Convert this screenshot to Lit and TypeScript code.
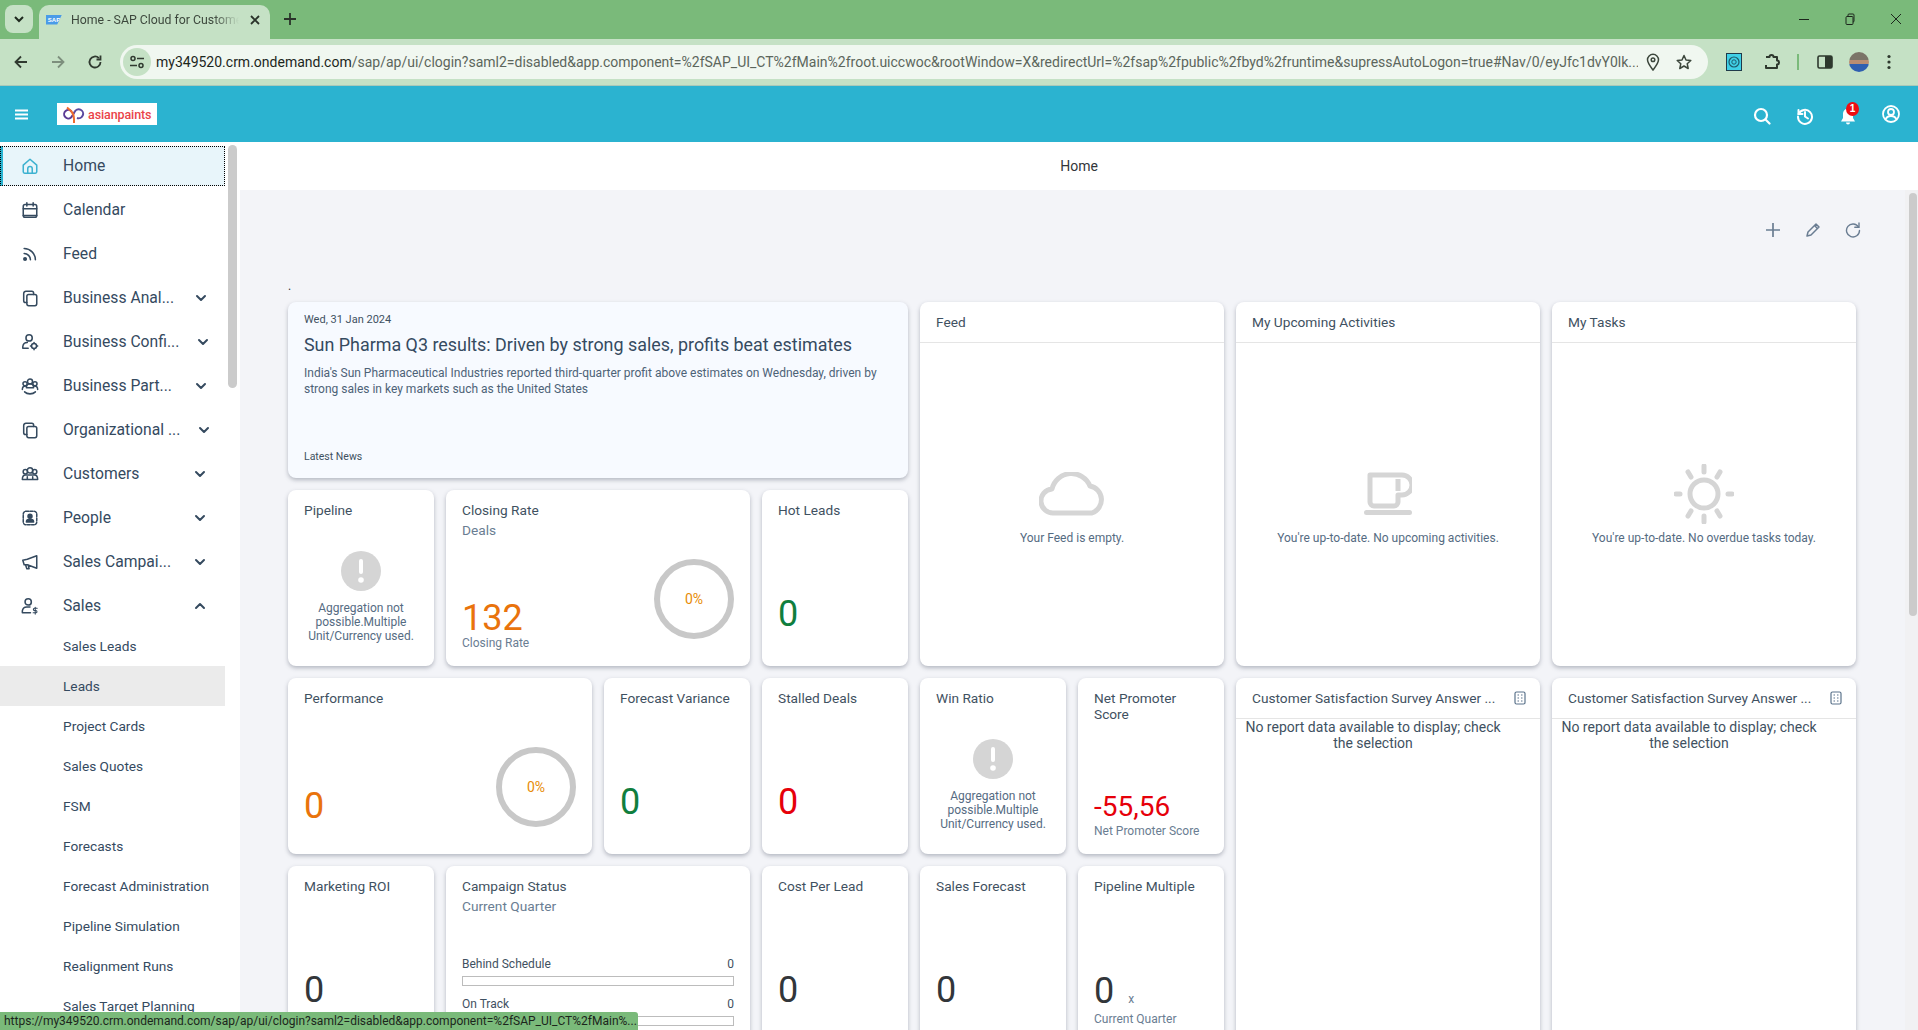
import { LitElement, html, css, svg } from "lit";
import { customElement } from "lit/decorators.js";

const line = (body: any, size = 18, box = 20) => html`<svg class="ico" width=${size} height=${size} viewBox="0 0 ${box} ${box}" fill="none" stroke="currentColor" stroke-width="1.700" stroke-linecap="round" stroke-linejoin="round">${body}</svg>`;

const navIcons: Record<string, any> = {
  home: svg`<path d="M2.500 9 10 2.500 17.500 9v7.500a1.500 1.500 0 0 1-1.500 1.500H4a1.500 1.500 0 0 1-1.500-1.500Z"/><path d="M7.500 18v-5a2.500 2.500 0 0 1 5 0v5"/>`,
  calendar: svg`<rect x="2.500" y="4" width="15" height="14" rx="2"/><path d="M2.500 8.500h15M6.500 2v3.500M13.500 2v3.500M2.500 16h15"/>`,
  feed: svg`<circle cx="4.500" cy="15.500" r="1.400" fill="currentColor"/><path d="M3.500 9.500a7 7 0 0 1 7 7M3.500 4a12.500 12.500 0 0 1 12.500 12.500"/>`,
  stack: svg`<rect x="6.500" y="6" width="11" height="12.500" rx="2"/><path d="M6.500 15H5a2 2 0 0 1-2-2V5a2.500 2.500 0 0 1 2.500-2.500H12a2 2 0 0 1 2 2V6"/>`,
  config: svg`<circle cx="9" cy="5.500" r="3.500"/><path d="M2 17v-2a5 5 0 0 1 5-4.500M2 17h6"/><circle cx="14.500" cy="14.500" r="2.800"/><path d="M14.500 10.500v1M14.500 17.500v1M10.500 14.500h1M17.500 14.500h1"/>`,
  partner: svg`<circle cx="10" cy="5" r="2.800"/><circle cx="4.500" cy="7.500" r="2.300"/><circle cx="15.500" cy="7.500" r="2.300"/><path d="M1.500 14c0-3 1.500-4 3.500-4M18.500 14c0-3-1.500-4-3.500-4M6 12c0-3 2-4.500 4-4.500s4 1.500 4 4.500Z"/><path d="M4 16.500c3 3 9 3 12 0"/>`,
  customers: svg`<circle cx="10" cy="6" r="3"/><circle cx="4.800" cy="7.500" r="2.400"/><circle cx="15.200" cy="7.500" r="2.400"/><path d="M1.500 16c0-3.500 1-5 3.500-5h10c2.500 0 3.500 1.500 3.500 5ZM7 16v-3M13 16v-3"/>`,
  people: svg`<rect x="2.500" y="2.500" width="15" height="15" rx="3" stroke-dasharray="3 1.500"/><circle cx="10" cy="8" r="2.200" fill="currentColor"/><path d="M6 14.500c0-2.500 2-3 4-3s4 .5 4 3Z" fill="currentColor"/>`,
  campaign: svg`<path d="M17.500 3v14L7 13H3.500L2 8l5-1ZM5 13l1.500 4.500H9L8 13.500"/>`,
  sales: svg`<circle cx="8" cy="5.500" r="3.500"/><path d="M1.500 17.500v-2A5 5 0 0 1 6.500 11H10M1.500 17.500h9"/><path d="M18 12.500h-3a1.200 1.200 0 0 0 0 2.500h1.500a1.200 1.200 0 0 1 0 2.500H13.500M15.800 11.500v7.500" stroke-width="1.200"/>`,
};

const down = (up = false) => html`<svg class="chev" width="12" height="12" viewBox="0 0 12 12" fill="none" stroke="currentColor" stroke-width="2" stroke-linecap="round" stroke-linejoin="round"><path d=${up ? "M2 8l4-4 4 4" : "M2 4l4 4 4-4"} /></svg>`;

type NavItem = { label: string; icon: string; chev?: "down" | "up"; nudge?: number; active?: boolean };

const NAV: NavItem[] = [
  { label: "Home", icon: "home", active: true },
  { label: "Calendar", icon: "calendar" },
  { label: "Feed", icon: "feed" },
  { label: "Business Anal...", icon: "stack", chev: "down", nudge: 18 },
  { label: "Business Confi...", icon: "config", chev: "down", nudge: 16 },
  { label: "Business Part...", icon: "partner", chev: "down", nudge: 18 },
  { label: "Organizational ...", icon: "stack", chev: "down", nudge: 15 },
  { label: "Customers", icon: "customers", chev: "down", nudge: 19 },
  { label: "People", icon: "people", chev: "down", nudge: 19 },
  { label: "Sales Campai...", icon: "campaign", chev: "down", nudge: 19 },
  { label: "Sales", icon: "sales", chev: "up", nudge: 19 },
];

const SUB = ["Sales Leads", "Leads", "Project Cards", "Sales Quotes", "FSM", "Forecasts", "Forecast Administration", "Pipeline Simulation", "Realignment Runs", "Sales Target Planning"];

const ring = html`<div class="ring"><span>0%</span></div>`;

const aggError = html`<div class="agg">
  <svg width="40" height="40" viewBox="0 0 40 40"><circle cx="20" cy="20" r="20" fill="#d5d5d5"/><rect x="18" y="8" width="4" height="15" rx="2" fill="#fff"/><circle cx="20" cy="29" r="2.800" fill="#fff"/></svg>
  <p>Aggregation not possible.Multiple Unit/Currency used.</p>
</div>`;

const kpi = (title: string, value: string, color: string, extra: { sub?: string; foot?: string; wide?: boolean; ring?: boolean; unit?: string; small?: boolean } = {}) => html`
  <div class="tile ${extra.wide ? "w2" : ""}">
    <div class="title">${title}</div>
    ${extra.sub ? html`<div class="sub">${extra.sub}</div>` : ""}
    <div class="body">
      <div class="nums">
        <div class="value ${color} ${extra.small ? "small" : ""} ${extra.ring && !extra.foot ? "ringgap" : ""} ${extra.foot ? "footed" : ""} ${extra.unit ? "united" : ""}">${value}${extra.unit ? html`<span class="unit">${extra.unit}</span>` : ""}</div>
        ${extra.foot ? html`<div class="foot">${extra.foot}</div>` : ""}
      </div>
      ${extra.ring ? ring : ""}
    </div>
  </div>`;

const errTile = (title: string) => html`<div class="tile"><div class="title">${title}</div>${aggError}</div>`;

const headTile = (title: string, text: string, art: any) => html`
  <div class="tile w2 h2 flush">
    <div class="thead"><span>${title}</span></div>
    <div class="empty"><div class="art">${art}</div><div class="etext">${text}</div></div>
  </div>`;

const surveyTile = html`
  <div class="tile w2 h2 flush">
    <div class="thead">
      <span class="ell">Customer Satisfaction Survey Answer ...</span>
      <svg width="12" height="14" viewBox="0 0 12 14" fill="none" stroke="#5b738b" stroke-width="1.200"><rect x="1" y="1" width="10" height="12" rx="1.500"/><path d="M3.500 4h1.500M7 4h1.500M3.500 7h1.500M7 7h1.500M3.500 10h1.500M7 10h1.500"/></svg>
    </div>
    <div class="nodata">No report data available to display; check the selection</div>
  </div>`;

@customElement("app-root")
export class AppRoot extends LitElement {
  static styles = css`
    :host {
      display: flex;
      flex-direction: column;
      height: 1030px;
      overflow: hidden;
      font-family: Roboto, "Noto Sans", sans-serif;
      color: #354a5f;
      background: #fff;
    }
    p { margin: 0; }

    .tabs {
      height: 39px;
      flex: none;
      background: #7aba7a;
      display: flex;
      align-items: flex-end;
      padding-left: 5px;
      color: #1f2a1f;
    }
    .tabsearch {
      width: 28px;
      height: 28px;
      margin-bottom: 6px;
      border-radius: 8px;
      background: #c5e1c5;
      display: grid;
      place-items: center;
    }
    .tab {
      width: 231px;
      height: 34px;
      margin-left: 6px;
      background: #c5e1c5;
      border-radius: 10px 10px 0 0;
      display: flex;
      align-items: center;
      padding: 0 0 5px 7px;
      box-sizing: border-box;
      font-size: 12.300px;
      color: #3c473c;
    }
    .fav {
      width: 16px;
      height: 10px;
      background: #4a9be8;
      color: #fff;
      font: 700 6px "Liberation Sans", sans-serif;
      text-align: center;
      line-height: 10px;
      clip-path: polygon(0 0, 100% 0, 70% 100%, 0 100%);
      flex: none;
    }
    .tabtext {
      width: 168px;
      margin-left: 9px;
      white-space: nowrap;
      overflow: hidden;
      -webkit-mask-image: linear-gradient(90deg, #000 85%, transparent);
    }
    .tabx { margin-left: 10px; display: flex; color: #2a332a; }
    .newtab { margin: 0 0 13px 13px; display: flex; color: #2a332a; }
    .winbtns {
      margin: 0 0 14px auto;
      display: flex;
      gap: 34px;
      padding-right: 16px;
      color: #1c261c;
    }
    .winbtns svg { display: block; }

    .toolbar {
      height: 46px;
      flex: none;
      background: #c5e1c5;
      border-bottom: 1px solid #a9c9b9;
      display: flex;
      align-items: center;
      color: #303a30;
    }
    .navbtns { display: flex; width: 120px; padding-left: 13px; gap: 21px; box-sizing: border-box; }
    .navbtns svg { flex: none; }
    .dim { color: #7d8f7d; }
    .pill {
      width: 1588px;
      height: 34px;
      border-radius: 17px;
      background: #f0f7f0;
      display: flex;
      align-items: center;
      padding-left: 3px;
      box-sizing: border-box;
    }
    .tune {
      width: 28px;
      height: 28px;
      border-radius: 50%;
      background: #c5e1c5;
      display: grid;
      place-items: center;
      flex: none;
    }
    .url {
      margin-left: 5px;
      width: 1482px;
      flex: none;
      white-space: nowrap;
      overflow: hidden;
      font-size: 14px;
      color: #5c665c;
    }
    .url b { font-weight: 400; color: #1c261c; }
    .pillend { display: flex; gap: 16px; margin-left: 8px; color: #3c473c; align-items: center; }
    .ext { display: flex; align-items: center; margin-left: 18px; color: #2d382d; }
    .extlogo { display: block; }
    .sep { width: 2px; height: 16px; background: #7aba7a; margin: 0 18px 0 16px; }
    .avatar { width: 20px; height: 20px; border-radius: 50%; background: linear-gradient(#7b7468 0 40%, #b98d72 40% 58%, #2f5fb0 58%); margin: 0 18px 0 16px; }

    .shellbar {
      height: 56px;
      flex: none;
      background: #2bb3d0;
      display: flex;
      align-items: center;
      color: #fff;
    }
    .burger { margin-left: 15px; display: flex; }
    .logo {
      margin-left: 29px;
      width: 100px;
      height: 22px;
      background: #fff;
      display: flex;
      align-items: center;
      padding-left: 5px;
      box-sizing: border-box;
      gap: 2px;
    }
    .logo span {
      font-size: 12.500px;
      font-weight: 500;
      letter-spacing: -0.100px;
      color: #ea4348;
    }
    .shellicons { margin-left: auto; display: flex; gap: 25px; padding-right: 18px; align-items: center; }
    .drop { margin-top: 3px; display: block; }
    .bell { position: relative; display: flex; margin-top: 3px; }
    .badge {
      position: absolute;
      top: -5px;
      left: 7px;
      width: 13px;
      height: 14px;
      border-radius: 50%;
      background: #ee0d12;
      font: 700 10px "Liberation Sans", sans-serif;
      line-height: 14px;
      text-align: center;
    }

    .app { flex: 1; min-height: 0; display: flex; }
    .side { width: 225px; flex: none; padding-top: 4px; overflow: hidden; }
    .row {
      height: 40px;
      margin-bottom: 4px;
      display: flex;
      align-items: center;
      font-size: 15.700px;
      white-space: nowrap;
      color: #354a5f;
      box-sizing: border-box;
    }
    .row span { line-height: 18px; padding-bottom: 1px; }
    .row .ico { margin-left: 21px; margin-right: 24px; flex: none; }
    .row.active {
      background: #e8f5fa;
      box-shadow: inset 3px 0 0 #2bb3d0;
      outline: 1px dotted #000;
      outline-offset: -1px;
    }
    .row.active .ico { color: #3db2d0; }
    .chev { flex: none; }
    .subrow {
      height: 40px;
      padding-left: 63px;
      display: flex;
      align-items: center;
      font-size: 13.700px;
      white-space: nowrap;
    }
    .subrow.sel { background: #ebebeb; }
    .subs { margin-top: -4px; }
    .rail { width: 15px; flex: none; padding: 3px 3px 0; box-sizing: border-box; }
    .thumb { width: 9px; height: 243px; border-radius: 5px; background: #cbcbcb; }

    .main { flex: 1; min-width: 0; display: flex; flex-direction: column; }
    .pagehead {
      height: 48px;
      flex: none;
      display: flex;
      align-items: center;
      justify-content: center;
      font-size: 14px;
      color: #32363a;
    }
    .stage { flex: 1; min-height: 0; display: flex; background: #f3f4f8; }
    .canvas { flex: 1; min-width: 0; padding-left: 48px; overflow: hidden; }
    .actions {
      height: 80px;
      display: flex;
      justify-content: flex-end;
      align-items: center;
      gap: 24px;
      padding-right: 44px;
      color: #6a7d92;
      box-sizing: border-box;
    }
    .dot { height: 32px; font-size: 12px; line-height: 32px; color: #32363a; }
    .vrail { width: 13px; flex: none; background: #f1f1f3; padding: 3px 1px 0 4px; box-sizing: border-box; }
    .vthumb { width: 8px; height: 423px; border-radius: 4px; background: #cbcbcb; }

    .grid {
      display: grid;
      grid-template-columns: repeat(10, 146px);
      grid-auto-rows: 176px;
      gap: 12px;
    }
    .tile {
      background: #fff;
      border-radius: 8px;
      box-shadow: 0 2px 4px rgba(60, 70, 90, 0.35);
      padding: 12px 16px 15px;
      box-sizing: border-box;
      display: flex;
      flex-direction: column;
      min-width: 0;
    }
    .w2 { grid-column: span 2; }
    .w4 { grid-column: span 4; }
    .h2 { grid-row: span 2; }
    .flush { padding: 0; }
    .title { font-size: 13.700px; line-height: 16px; color: #3f5161; }
    .sub { font-size: 13.700px; line-height: 16px; margin-top: 4px; color: #6a7d92; }
    .body { flex: 1; display: flex; align-items: flex-end; justify-content: space-between; min-height: 0; }
    .value { font-size: 36px; line-height: 36px; margin-bottom: 19px; }
    .value.ringgap { margin-bottom: 15px; }
    .value.footed { margin-bottom: -1px; }
    .value.united { margin-bottom: 2px; }
    .value.small { font-size: 28px; line-height: 28px; margin-bottom: 2px; }
    .orange { color: #e9730c; }
    .green { color: #107e3e; }
    .red { color: #e6000a; }
    .dark { color: #32363a; }
    .unit { font-size: 12px; line-height: 1; color: #6a7d92; margin-left: 14px; }
    .foot { font-size: 12px; line-height: 16px; color: #6a7d92; }
    .ring {
      width: 80px;
      height: 80px;
      border: 6px solid #c8c8c8;
      border-radius: 50%;
      box-sizing: border-box;
      margin-bottom: 12px;
      display: grid;
      place-items: center;
      font-size: 14px;
      color: #e78c07;
      flex: none;
    }
    .agg { margin-top: 33px; text-align: center; display: flex; flex-direction: column; align-items: center; }
    .agg p { margin-top: 10px; font-size: 12px; line-height: 14px; color: #556b82; }

    .news { background: #f7faff; padding: 12px 16px; }
    .ndate { font-size: 11px; line-height: 12px; color: #3f5161; }
    .nhead { font-size: 17.900px; line-height: 24px; margin-top: 7px; color: #354a5f; white-space: nowrap; }
    .ndesc { font-size: 12px; line-height: 16px; margin-top: 8px; color: #4d6277; }
    .nfoot { margin-top: auto; font-size: 10.500px; line-height: 14px; margin-bottom: 2px; color: #3f5161; }

    .thead {
      height: 41px;
      flex: none;
      border-bottom: 1px solid #e5e5e5;
      padding: 0 14px 0 16px;
      display: flex;
      align-items: center;
      justify-content: space-between;
      font-size: 13.700px;
      color: #3f5161;
      box-sizing: border-box;
    }
    .ell { white-space: nowrap; overflow: hidden; }
    .empty { flex: 1; display: flex; flex-direction: column; align-items: center; justify-content: center; }
    .art { height: 60px; display: flex; align-items: center; justify-content: center; color: #d5d5d5; }
    .etext { margin-top: 6px; font-size: 12px; line-height: 16px; color: #556b82; }
    .nodata { padding: 0 38px 0 8px; text-align: center; font-size: 14px; line-height: 16px; color: #3f5161; }

    .cbars { margin-top: 42px; }
    .cbar { font-size: 12px; line-height: 16px; height: 40px; color: #3f5161; }
    .cbar div:first-child { display: flex; justify-content: space-between; }
    .track { height: 10px; margin-top: 4px; border: 1px solid #bcbcbc; background: #fff; box-sizing: border-box; }

    .status {
      position: fixed;
      left: 0;
      bottom: 0;
      width: 638px;
      height: 18px;
      background: #7aba7a;
      border-top-right-radius: 3px;
      padding-left: 4px;
      box-sizing: border-box;
      font-size: 12px;
      line-height: 18px;
      color: #1c261c;
      white-space: nowrap;
      overflow: hidden;
    }
  `;

  private chromeBars() {
    return html`
      <div class="tabs">
        <div class="tabsearch"><svg width="12" height="12" viewBox="0 0 12 12" fill="none" stroke="currentColor" stroke-width="2"><path d="M2 4l4 4 4-4"/></svg></div>
        <div class="tab">
          <div class="fav">SAP</div>
          <div class="tabtext">Home - SAP Cloud for Customer</div>
          <span class="tabx"><svg width="12" height="12" viewBox="0 0 12 12" fill="none" stroke="currentColor" stroke-width="1.800"><path d="M2 2l8 8M10 2l-8 8"/></svg></span>
        </div>
        <span class="newtab"><svg width="14" height="14" viewBox="0 0 14 14" fill="none" stroke="currentColor" stroke-width="1.800"><path d="M7 1v12M1 7h12"/></svg></span>
        <div class="winbtns">
          <svg width="12" height="12" viewBox="0 0 12 12" fill="none" stroke="currentColor"><path d="M1 6.500h10"/></svg>
          <svg width="12" height="12" viewBox="0 0 12 12" fill="none" stroke="currentColor"><rect x="2" y="3.500" width="7" height="8" rx="1"/><path d="M4 3.500V2a1 1 0 0 1 1-1h4a1 1 0 0 1 1 1v6a1 1 0 0 1-1 1"/></svg>
          <svg width="12" height="12" viewBox="0 0 12 12" fill="none" stroke="currentColor"><path d="M1 1l10 10M11 1L1 11"/></svg>
        </div>
      </div>
      <div class="toolbar">
        <div class="navbtns">
          <svg width="16" height="16" viewBox="0 0 16 16" fill="none" stroke="currentColor" stroke-width="1.800"><path d="M14 8H2.500M8 2.500 2.500 8 8 13.500"/></svg>
          <svg class="dim" width="16" height="16" viewBox="0 0 16 16" fill="none" stroke="currentColor" stroke-width="1.800"><path d="M2 8h11.500M8 2.500 13.500 8 8 13.500"/></svg>
          <svg width="16" height="16" viewBox="0 0 16 16" fill="none" stroke="currentColor" stroke-width="1.800"><path d="M13.500 8a5.500 5.500 0 1 1-1.600-3.900"/><path d="M13.500 1.500v4h-4" /></svg>
        </div>
        <div class="pill">
          <div class="tune"><svg width="16" height="14" viewBox="0 0 16 14" fill="none" stroke="currentColor" stroke-width="1.500"><circle cx="4" cy="3.500" r="2"/><path d="M8 3.500h7M1 10.500h7"/><circle cx="12" cy="10.500" r="2"/></svg></div>
          <div class="url"><b>my349520.crm.ondemand.com</b>/sap/ap/ui/clogin?saml2=disabled&amp;app.component=%2fSAP_UI_CT%2fMain%2froot.uiccwoc&amp;rootWindow=X&amp;redirectUrl=%2fsap%2fpublic%2fbyd%2fruntime&amp;supressAutoLogon=true#Nav/0/eyJfc1dvY0lk...</div>
          <div class="pillend">
            <svg width="14" height="18" viewBox="0 0 14 18" fill="none" stroke="currentColor" stroke-width="1.500"><path d="M7 17C4 13 1.500 10 1.500 6.800a5.500 5.500 0 0 1 11 0C12.500 10 10 13 7 17Z"/><circle cx="7" cy="6.800" r="1.800"/></svg>
            <svg width="16" height="16" viewBox="0 0 16 16" fill="none" stroke="currentColor" stroke-width="1.500" stroke-linejoin="round"><path d="M8 1.500 10 6l4.800.5-3.600 3.200 1 4.800L8 12l-4.200 2.500 1-4.800L1.200 6.500 6 6Z"/></svg>
          </div>
        </div>
        <div class="ext">
          <svg class="extlogo" width="16" height="18" viewBox="0 0 16 18" fill="none"><rect x=".5" y=".5" width="15" height="17" fill="#3fd0e6" stroke="#1f3a4a"/><circle cx="8" cy="9" r="5" stroke="#1f5a6a" stroke-width="1.200"/><circle cx="8" cy="9" r="2.200" stroke="#1f5a6a"/></svg>
          <svg style="margin-left:21px" width="18" height="18" viewBox="0 0 18 18" fill="none" stroke="currentColor" stroke-width="2" stroke-linejoin="round"><path d="M3 4h3.500a2 2 0 0 1 4 0H14v3.500a2 2 0 0 1 0 4V15H3v-3"/></svg>
          <span class="sep"></span>
          <svg width="16" height="16" viewBox="0 0 16 16"><rect x="1" y="2" width="14" height="12" rx="1.500" fill="none" stroke="currentColor" stroke-width="1.600"/><rect x="8" y="2" width="7" height="12" fill="currentColor"/></svg>
          <span class="avatar"></span>
          <svg width="4" height="16" viewBox="0 0 4 16" fill="currentColor"><circle cx="2" cy="2.500" r="1.600"/><circle cx="2" cy="8" r="1.600"/><circle cx="2" cy="13.500" r="1.600"/></svg>
        </div>
      </div>`;
  }

  private shell() {
    return html`
      <div class="shellbar">
        <span class="burger"><svg width="13" height="11" viewBox="0 0 13 11" fill="none" stroke="currentColor" stroke-width="2"><path d="M0 1.500h13M0 5.500h13M0 9.500h13"/></svg></span>
        <div class="logo">
          <svg width="24" height="20" viewBox="0 0 24 20" fill="none" stroke-width="2"><path d="M9.500 7.500A4.200 4.200 0 1 0 9 13.500c1.500-1.500 2.500-3.500 3.500-5.500" stroke="#5b3a94"/><path d="M5 3.500l4 3.500c2 2 3 5 3 8v4" stroke="#ef6c2f"/><path d="M12.500 8a4.500 4.500 0 1 1 2.500 6" stroke="#5a4aa0"/></svg>
          <span>asianpaints</span>
        </div>
        <div class="shellicons">
          <svg class="drop" width="18" height="18" viewBox="0 0 18 18" fill="none" stroke="currentColor" stroke-width="2.200" stroke-linecap="round"><circle cx="8" cy="8" r="6"/><path d="M12.500 12.500l4 4"/></svg>
          <svg class="drop" width="18" height="18" viewBox="0 0 18 18" fill="none" stroke="currentColor" stroke-width="2" stroke-linecap="round"><path d="M2.500 3v4h4"/><path d="M2.600 7A7 7 0 1 1 2 9.500"/><path d="M9 5v4.500l3 2"/></svg>
          <span class="bell">
            <svg width="18" height="18" viewBox="0 0 18 18" fill="currentColor"><path d="M9 1.500c-3 0-5 2.500-5 5.500v4L2 14.500h14L14 11V7c0-3-2-5.500-5-5.500ZM7 15.500a2 2 0 0 0 4 0Z"/></svg>
            <span class="badge">1</span>
          </span>
          <svg width="18" height="18" viewBox="0 0 18 18" fill="none" stroke="currentColor" stroke-width="1.800"><circle cx="9" cy="9" r="8"/><circle cx="9" cy="7" r="3"/><path d="M3.500 14.500c1-2.500 3-3.500 5.500-3.500s4.500 1 5.500 3.500"/></svg>
        </div>
      </div>`;
  }

  private side() {
    return html`
      <div class="side">
        ${NAV.map((n) => html`
          <div class="row ${n.active ? "active" : ""}">
            ${line(navIcons[n.icon])}
            <span>${n.label}</span>
            ${n.chev ? html`<span style="margin-left:auto;margin-right:${n.nudge}px;display:flex">${down(n.chev === "up")}</span>` : ""}
          </div>`)}
        <div class="subs">
          ${SUB.map((s) => html`<div class="subrow ${s === "Leads" ? "sel" : ""}">${s}</div>`)}
        </div>
      </div>
      <div class="rail"><div class="thumb"></div></div>`;
  }

  private tiles() {
    const cloud = html`<svg width="66" height="44" viewBox="0 0 66 44" fill="none" stroke="currentColor" stroke-width="5"><path d="M15 41a12 12 0 0 1-2-24 20 20 0 0 1 38-3 14 14 0 0 1 2 27Z" stroke-linejoin="round"/></svg>`;
    const mug = html`<svg width="48" height="44" viewBox="0 0 48 44" fill="none" stroke="currentColor"><path d="M6 3h32a7 7 0 0 1 0 20h-4v7a4 4 0 0 1-4 4H10a4 4 0 0 1-4-4Z" stroke-width="5" stroke-linejoin="round"/><path d="M34 7v12" stroke-width="5"/><rect y="38" width="48" height="5" rx="2.500" fill="currentColor" stroke="none"/></svg>`;
    const sun = html`<svg width="60" height="60" viewBox="0 0 60 60" fill="none" stroke="currentColor"><circle cx="30" cy="30" r="14" stroke-width="5"/><path d="M30 2v6M30 52v6M2 30h4M54 30h4M14 8l3 5M46 8l-3 5M14 52l3-5M46 52l-3-5" stroke-width="5" stroke-linecap="round"/></svg>`;
    return html`
      <div class="grid">
        <div class="tile w4 news">
          <div class="ndate">Wed, 31 Jan 2024</div>
          <div class="nhead">Sun Pharma Q3 results: Driven by strong sales, profits beat estimates</div>
          <div class="ndesc">India's Sun Pharmaceutical Industries reported third-quarter profit above estimates on Wednesday, driven by strong sales in key markets such as the United States</div>
          <div class="nfoot">Latest News</div>
        </div>
        ${headTile("Feed", "Your Feed is empty.", cloud)}
        ${headTile("My Upcoming Activities", "You're up-to-date. No upcoming activities.", mug)}
        ${headTile("My Tasks", "You're up-to-date. No overdue tasks today.", sun)}

        ${errTile("Pipeline")}
        ${kpi("Closing Rate", "132", "orange", { sub: "Deals", foot: "Closing Rate", wide: true, ring: true })}
        ${kpi("Hot Leads", "0", "green")}

        ${kpi("Performance", "0", "orange", { wide: true, ring: true })}
        ${kpi("Forecast Variance", "0", "green")}
        ${kpi("Stalled Deals", "0", "red")}
        ${errTile("Win Ratio")}
        ${kpi("Net Promoter Score", "-55,56", "red", { foot: "Net Promoter Score", small: true })}
        ${surveyTile}
        ${surveyTile}

        ${kpi("Marketing ROI", "0", "dark")}
        <div class="tile w2">
          <div class="title">Campaign Status</div>
          <div class="sub">Current Quarter</div>
          <div class="cbars">
            <div class="cbar"><div><span>Behind Schedule</span><span>0</span></div><div class="track"></div></div>
            <div class="cbar"><div><span>On Track</span><span>0</span></div><div class="track"></div></div>
          </div>
        </div>
        ${kpi("Cost Per Lead", "0", "dark")}
        ${kpi("Sales Forecast", "0", "dark")}
        ${kpi("Pipeline Multiple", "0", "dark", { foot: "Current Quarter", unit: "x" })}
      </div>`;
  }

  render() {
    return html`
      ${this.chromeBars()}
      ${this.shell()}
      <div class="app">
        ${this.side()}
        <div class="main">
          <div class="pagehead">Home</div>
          <div class="stage">
            <div class="canvas">
              <div class="actions">
                <svg width="16" height="16" viewBox="0 0 16 16" fill="none" stroke="currentColor" stroke-width="1.700"><path d="M8 1v14M1 8h14"/></svg>
                <svg width="16" height="16" viewBox="0 0 16 16" fill="none" stroke="currentColor" stroke-width="1.500" stroke-linejoin="round"><path d="M2 14l1-4 8-8 3 3-8 8Z"/><path d="M9.500 3.500l3 3"/></svg>
                <svg width="16" height="16" viewBox="0 0 16 16" fill="none" stroke="currentColor" stroke-width="1.400" stroke-linecap="round"><path d="M13.500 5A6.500 6.500 0 1 0 14.500 8.500"/><path d="M14 1v4.200H9.800"/></svg>
              </div>
              <div class="dot">.</div>
              ${this.tiles()}
            </div>
            <div class="vrail"><div class="vthumb"></div></div>
          </div>
        </div>
      </div>
      <div class="status">https://my349520.crm.ondemand.com/sap/ap/ui/clogin?saml2=disabled&amp;app.component=%2fSAP_UI_CT%2fMain%...</div>`;
  }
}
